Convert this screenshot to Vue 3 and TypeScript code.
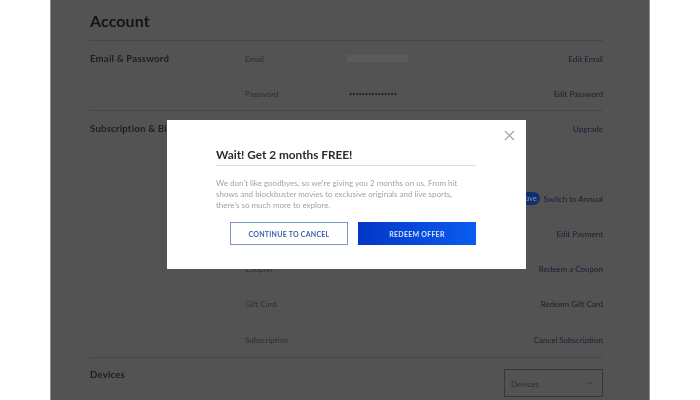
<template>
  <div class="page">
    <main class="account">
      <h1 class="account-title">Account</h1>

      <section v-for="section in sections" :key="section.title" class="section">
        <h2 class="section-title">{{ section.title }}</h2>
        <div class="section-rows">
          <div v-for="(row, index) in section.rows" :key="index" class="row">
            <span class="row-label">{{ row.label }}</span>
            <span v-if="row.masked" class="row-masked"></span>
            <span v-else-if="row.value" class="row-value">{{ row.value }}</span>
            <span class="row-action">
              <span v-if="row.badge" class="row-badge">{{ row.badge }}</span>
              {{ row.action }}
            </span>
          </div>
        </div>
      </section>

      <section class="section section-devices">
        <h2 class="section-title">Devices</h2>
        <div class="device-select">
          <span>Devices</span>
          <svg width="7" height="5" viewBox="0 0 7 5" fill="none" stroke="#2c2c2c" stroke-width="1">
            <path d="M1 1l2.500 2.500L6 1" />
          </svg>
        </div>
      </section>
    </main>

    <div class="modal">
      <button class="modal-close" aria-label="Close">
        <svg width="11" height="11" viewBox="0 0 11 11" fill="none" stroke="#a0a0a0" stroke-width="1.1">
          <path d="M1 1l9 9M10 1l-9 9" />
        </svg>
      </button>
      <h3 class="modal-title">Wait! Get 2 months FREE!</h3>
      <p class="modal-text">
        We don't like goodbyes, so we're giving you 2 months on us. From hit shows and blockbuster
        movies to exclusive originals and live sports, there's so much more to explore.
      </p>
      <div class="modal-actions">
        <button class="btn btn-outline">CONTINUE TO CANCEL</button>
        <button class="btn btn-primary">REDEEM OFFER</button>
      </div>
    </div>
  </div>
</template>

<script setup lang="ts">
interface AccountRow {
  label?: string;
  value?: string;
  masked?: boolean;
  badge?: string;
  action?: string;
}

interface AccountSection {
  title: string;
  rows: AccountRow[];
}

const sections: AccountSection[] = [
  {
    title: "Email & Password",
    rows: [
      { label: "Email", masked: true, action: "Edit Email" },
      { label: "Password", value: "•••••••••••••••", action: "Edit Password" },
    ],
  },
  {
    title: "Subscription & Billing",
    rows: [
      { action: "Upgrade" },
      {},
      { badge: "Save", action: "Switch to Annual" },
      { action: "Edit Payment" },
      { label: "Coupon", action: "Redeem a Coupon" },
      { label: "Gift Card", action: "Redeem Gift Card" },
      { label: "Subscription", action: "Cancel Subscription" },
    ],
  },
];
</script>

<style>
html,
body {
  margin: 0;
  background: #fff;
}
</style>

<style scoped>
.page {
  position: relative;
  box-sizing: border-box;
  width: 600px;
  height: 400px;
  margin: 0 auto;
  overflow: hidden;
  border-left: 1px solid #8c8c8c;
  border-right: 1px solid #8c8c8c;
  background: #535353;
  font-family: Lato, "Noto Sans", sans-serif;
}

.account {
  height: 400px;
  box-sizing: border-box;
  padding: 0 46px 0 39px;
  background: #535353;
  filter: blur(0.6px);
}

.account-title {
  margin: 0;
  height: 40px;
  font-size: 16px;
  font-weight: 700;
  line-height: 42px;
  letter-spacing: 0.1px;
  color: #141414;
}

.section {
  display: flex;
  border-top: 1px solid #474747;
}

.section:first-of-type {
  margin-bottom: -1px;
}

.section-title {
  width: 155px;
  flex: none;
  margin: 11px 0 0;
  font-size: 9.600px;
  font-weight: 700;
  line-height: 13px;
  letter-spacing: 0.2px;
  color: #1e1e1e;
}

.section-rows {
  flex: 1;
}

.row {
  display: flex;
  align-items: center;
  height: 35.170px;
  font-size: 8px;
}

.section:first-of-type .row {
  height: 35px;
}

.row-label {
  width: 102px;
  flex: none;
  color: #2e2e2e;
}

.row-masked {
  width: 61px;
  height: 7px;
  background: #5b5b5b;
}

.row-value {
  margin-left: 2px;
  font-size: 5.500px;
  color: #1c1c1c;
}

.row-action {
  display: flex;
  align-items: center;
  gap: 4px;
  margin-left: auto;
  color: #1c1e33;
}

.row-badge {
  padding: 0 3px 0 16px;
  border-radius: 7px;
  line-height: 13px;
  font-size: 7px;
  background: #12306e;
  color: #7f93c0;
}

.section-devices {
  justify-content: space-between;
}

.section-devices .section-title {
  margin-top: 10px;
}

.device-select {
  display: flex;
  align-items: center;
  justify-content: space-between;
  box-sizing: border-box;
  width: 99px;
  height: 28px;
  margin-top: 11px;
  padding: 1px 9px 0 6px;
  border: 1px solid #383838;
  font-size: 8px;
  color: #2e2e2e;
}

.modal {
  position: absolute;
  left: 116px;
  top: 120px;
  box-sizing: border-box;
  width: 359px;
  height: 149px;
  padding: 28px 50px 0 49px;
  background: #fff;
  filter: blur(0.3px);
}

.modal-close {
  position: absolute;
  top: 10px;
  right: 11px;
  display: flex;
  padding: 0;
  border: 0;
  background: none;
}

.modal-title {
  margin: 0;
  padding-bottom: 3px;
  border-bottom: 1px solid #ddd;
  font-size: 11.800px;
  font-weight: 700;
  line-height: 14px;
  color: #2b2b2b;
}

.modal-text {
  margin: 12px 0 0;
  font-size: 8px;
  line-height: 11px;
  color: #a3a3a3;
}

.modal-actions {
  display: flex;
  justify-content: flex-end;
  gap: 10px;
  margin-top: 11px;
}

.btn {
  width: 118px;
  height: 23px;
  padding: 0;
  font-family: inherit;
  font-size: 7px;
  font-weight: 700;
  letter-spacing: 0.25px;
}

.btn-outline {
  border: 1px solid #7c95c8;
  background: #fff;
  color: #3f5fa6;
}

.btn-primary {
  border: 0;
  background: linear-gradient(90deg, #0336c6, #0a5cf0);
  color: #d4e2ff;
}
</style>
